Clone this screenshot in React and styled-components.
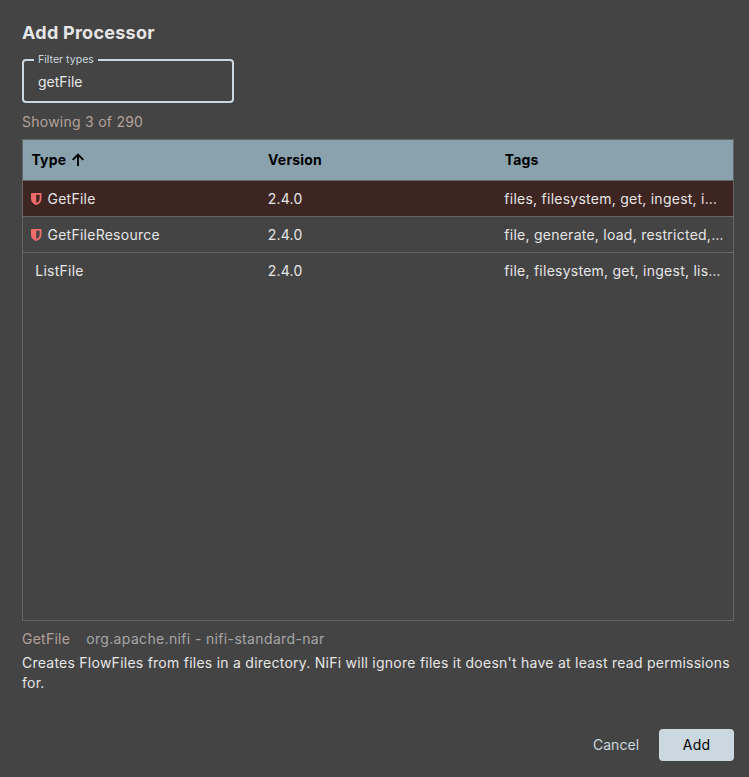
import React from "react";
import styled, { createGlobalStyle } from "styled-components";

const GlobalStyle = createGlobalStyle`
  * { box-sizing: border-box; }
  html, body { margin: 0; background: #444; }
`;

const Dialog = styled.main`
  display: flex;
  flex-direction: column;
  width: 749px;
  height: 777px;
  padding: 20px 15px 16px 22px;
  background: #444444;
  color: #e6e6e6;
  font: 400 14px/20px Inter, sans-serif;
  letter-spacing: 0.25px;
`;

const Title = styled.h1`
  margin: 0;
  font-size: 18px;
  line-height: 26px;
  font-weight: 650;
  letter-spacing: 0.26px;
`;

const Field = styled.fieldset`
  width: 212px;
  height: 50px;
  margin: 7px 0 0;
  padding: 0 14px;
  border: 2px solid #cbd8df;
  border-radius: 4px;
`;

const FieldLabel = styled.legend`
  margin-left: -4px;
  padding: 0 4px;
  height: 14px;
  color: #cbd8df;
  font-size: 10.5px;
  line-height: 14px;
  letter-spacing: 0.04px;
`;

const FieldInput = styled.input`
  display: block;
  width: 100%;
  height: 20px;
  margin-top: 5px;
  padding: 0;
  border: 0;
  outline: 0;
  background: transparent;
  color: #e6e6e6;
  font: inherit;
  letter-spacing: 0;
`;

const Count = styled.p`
  margin: 9px 0 7px;
  color: #b3a19b;
`;

const Table = styled.section`
  height: 482px;
  border: 1px solid #666666;
`;

const Row = styled.div`
  display: grid;
  grid-template-columns: repeat(3, minmax(0, 1fr));
  align-items: center;
  height: 36px;
  border-bottom: 1px solid ${(p) => (p.$last ? "transparent" : "#666666")};
  background: ${(p) => (p.$selected ? "#3d2521" : "transparent")};
`;

const HeaderRow = styled(Row)`
  height: 41px;
  background: #8aa2ae;
  color: #000;
  font-weight: 650;
  letter-spacing: 0.2px;
`;

const Cell = styled.div`
  padding: 0 8px;
  overflow: hidden;
  text-overflow: ellipsis;
  white-space: nowrap;
`;

const HeaderCell = styled(Cell)`
  display: flex;
  align-items: center;
  gap: 6px;
  padding-left: 8.4px;
`;

const TypeCell = styled(Cell)`
  display: flex;
  align-items: center;
  gap: 6px;
  padding-left: ${(p) => (p.$restricted ? "8px" : "12.3px")};
`;

const Icon = styled.svg`
  display: block;
  flex: none;
`;

const Bundle = styled.div`
  display: flex;
  gap: 16px;
  margin-top: 8px;
  color: #a6a6a6;
`;

const BundleType = styled.span`
  color: #b3a19b;
`;

const BundleName = styled.span`
  letter-spacing: 0.35px;
`;

const Description = styled.p`
  margin: 4px 0 0;
`;

const Actions = styled.footer`
  display: flex;
  justify-content: flex-end;
  gap: 8px;
  margin-top: auto;
`;

const Button = styled.button`
  height: 32px;
  width: ${(p) => (p.$primary ? "75px" : "70px")};
  padding: 0;
  border: 0;
  border-radius: 4px;
  background: ${(p) => (p.$primary ? "#cbd8df" : "transparent")};
  color: ${(p) => (p.$primary ? "#000" : "#cbd8df")};
  font: inherit;
  letter-spacing: ${(p) => (p.$primary ? "0.25px" : "0.05px")};
`;

const SortArrow = () => (
  <Icon width="12" height="14" viewBox="0 0 12 14" fill="none" stroke="#000" strokeWidth="1.9">
    <path d="M6 13V1.6M0.7 6.8 6 1.5l5.300 5.300" />
  </Icon>
);

const Shield = () => (
  <Icon width="10.500" height="12" viewBox="0 0 10.500 12">
    <path
      fill="#ef6c6c"
      fillRule="evenodd"
      d="M.7 0H9.800q.7 0 .7.700v5Q10.500 10 5.250 12Q0 10 0 5.700V.7Q0 0 .7 0ZM5.250 1.700V10Q8.600 8.400 8.600 5.700V1.700Z"
    />
  </Icon>
);

const processors = [
  { type: "GetFile", version: "2.4.0", restricted: true, tags: "files, filesystem, get, ingest, ingress, input, local, restricted, source" },
  { type: "GetFileResource", version: "2.4.0", restricted: true, tags: "file, generate, load, restricted, test" },
  { type: "ListFile", version: "2.4.0", restricted: false, tags: "file, filesystem, get, ingest, list, source" },
];

export default function App() {
  return (
    <>
      <GlobalStyle />
      <Dialog>
        <Title>Add Processor</Title>
        <Field>
          <FieldLabel>Filter types</FieldLabel>
          <FieldInput defaultValue="getFile" aria-label="Filter types" spellCheck={false} />
        </Field>
        <Count>Showing 3 of 290</Count>
        <Table>
          <HeaderRow>
            <HeaderCell>Type <SortArrow /></HeaderCell>
            <HeaderCell>Version</HeaderCell>
            <HeaderCell>Tags</HeaderCell>
          </HeaderRow>
          {processors.map((p, i) => (
            <Row key={p.type} $selected={i === 0} $last={i === processors.length - 1}>
              <TypeCell $restricted={p.restricted}>
                {p.restricted && <Shield />}
                {p.type}
              </TypeCell>
              <Cell>{p.version}</Cell>
              <Cell>{p.tags}</Cell>
            </Row>
          ))}
        </Table>
        <Bundle>
          <BundleType>GetFile</BundleType>
          <BundleName>org.apache.nifi - nifi-standard-nar</BundleName>
        </Bundle>
        <Description>
          Creates FlowFiles from files in a directory. NiFi will ignore files it doesn't have at least read permissions for.
        </Description>
        <Actions>
          <Button>Cancel</Button>
          <Button $primary>Add</Button>
        </Actions>
      </Dialog>
    </>
  );
}
